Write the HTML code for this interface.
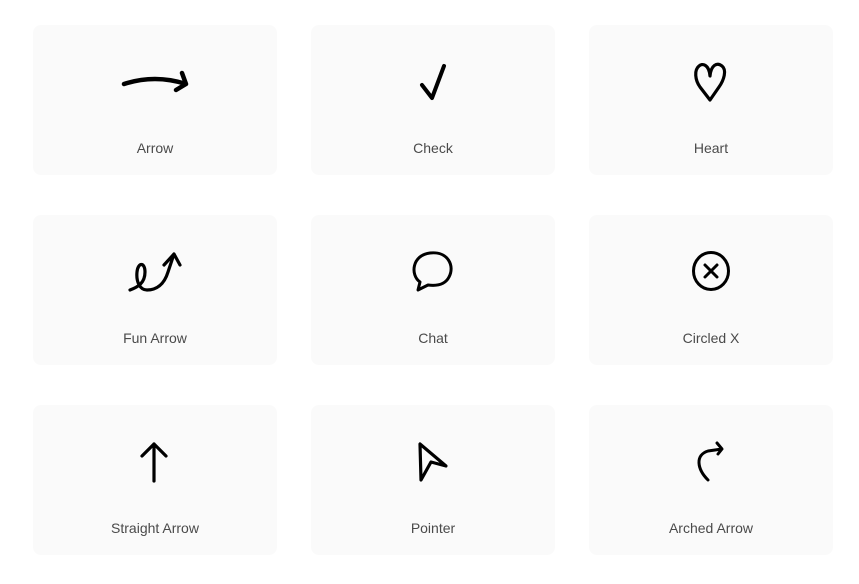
<!DOCTYPE html><html><head><style>
body{margin:0;width:859px;height:584px;background:#fff;position:relative;font-family:"Liberation Sans",sans-serif;overflow:hidden}
.c{position:absolute;width:244px;height:150px;background:#fafafa;border-radius:8px}
.l{position:absolute;width:244px;text-align:center;font-size:14px;color:#4a4a4a}
svg{position:absolute;left:0;top:0}
</style></head><body>
<div class="c" style="left:33px;top:25px"></div><div class="c" style="left:311px;top:25px"></div><div class="c" style="left:589px;top:25px"></div>
<div class="c" style="left:33px;top:215px"></div><div class="c" style="left:311px;top:215px"></div><div class="c" style="left:589px;top:215px"></div>
<div class="c" style="left:33px;top:405px"></div><div class="c" style="left:311px;top:405px"></div><div class="c" style="left:589px;top:405px"></div>
<div class="l" style="left:33px;top:140px">Arrow</div><div class="l" style="left:311px;top:140px">Check</div><div class="l" style="left:589px;top:140px">Heart</div>
<div class="l" style="left:33px;top:330px">Fun Arrow</div><div class="l" style="left:311px;top:330px">Chat</div><div class="l" style="left:589px;top:330px">Circled X</div>
<div class="l" style="left:33px;top:520px">Straight Arrow</div><div class="l" style="left:311px;top:520px">Pointer</div><div class="l" style="left:589px;top:520px">Arched Arrow</div>
<svg width="859" height="584" fill="none" stroke="#000" stroke-linecap="round" stroke-linejoin="round">
<path d="M124 84 Q155 74 186 84 M182 73 L186 84 L176 90" stroke-width="4.5"/>
<path d="M422 85 L432 98 L444 66" stroke-width="4"/>
<path d="M710 76 C709 64 702 63 699 66 C694 70 695 80 700 87 L710 100 L719 87 C724 80 727 70 722 66 C717 62 711 65 710 76 Z" stroke-width="3.2"/>
<path d="M130 290 C138 287 145 283 145 272 C145 262 138 262 137 272 C136 282 140 290 147 290 C156 290 164 285 168 272 L174 254 M164 265 L174 254 L180 265" stroke-width="3.2"/>
<path d="M420 282 C410 275 412 255 430 253 C448 251 455 266 449 277 C445 285 436 286 428 285 L418 290 Z" stroke-width="3"/>
<ellipse cx="711" cy="271" rx="17.5" ry="18.5" stroke-width="3"/>
<path d="M705 265 L717 277 M717 265 L705 277" stroke-width="3"/>
<path d="M154 481 L154 444 M142 456 L154 444 L166 456" stroke-width="3.2"/>
<path d="M420 444 L421 480 L431 462 L446 466 Z" stroke-width="3.2"/>
<path d="M708 480 C697 469 695 455 708 451 L722 449 M717 443 L722 449 L718 454" stroke-width="3"/>
</svg>
</body></html>
